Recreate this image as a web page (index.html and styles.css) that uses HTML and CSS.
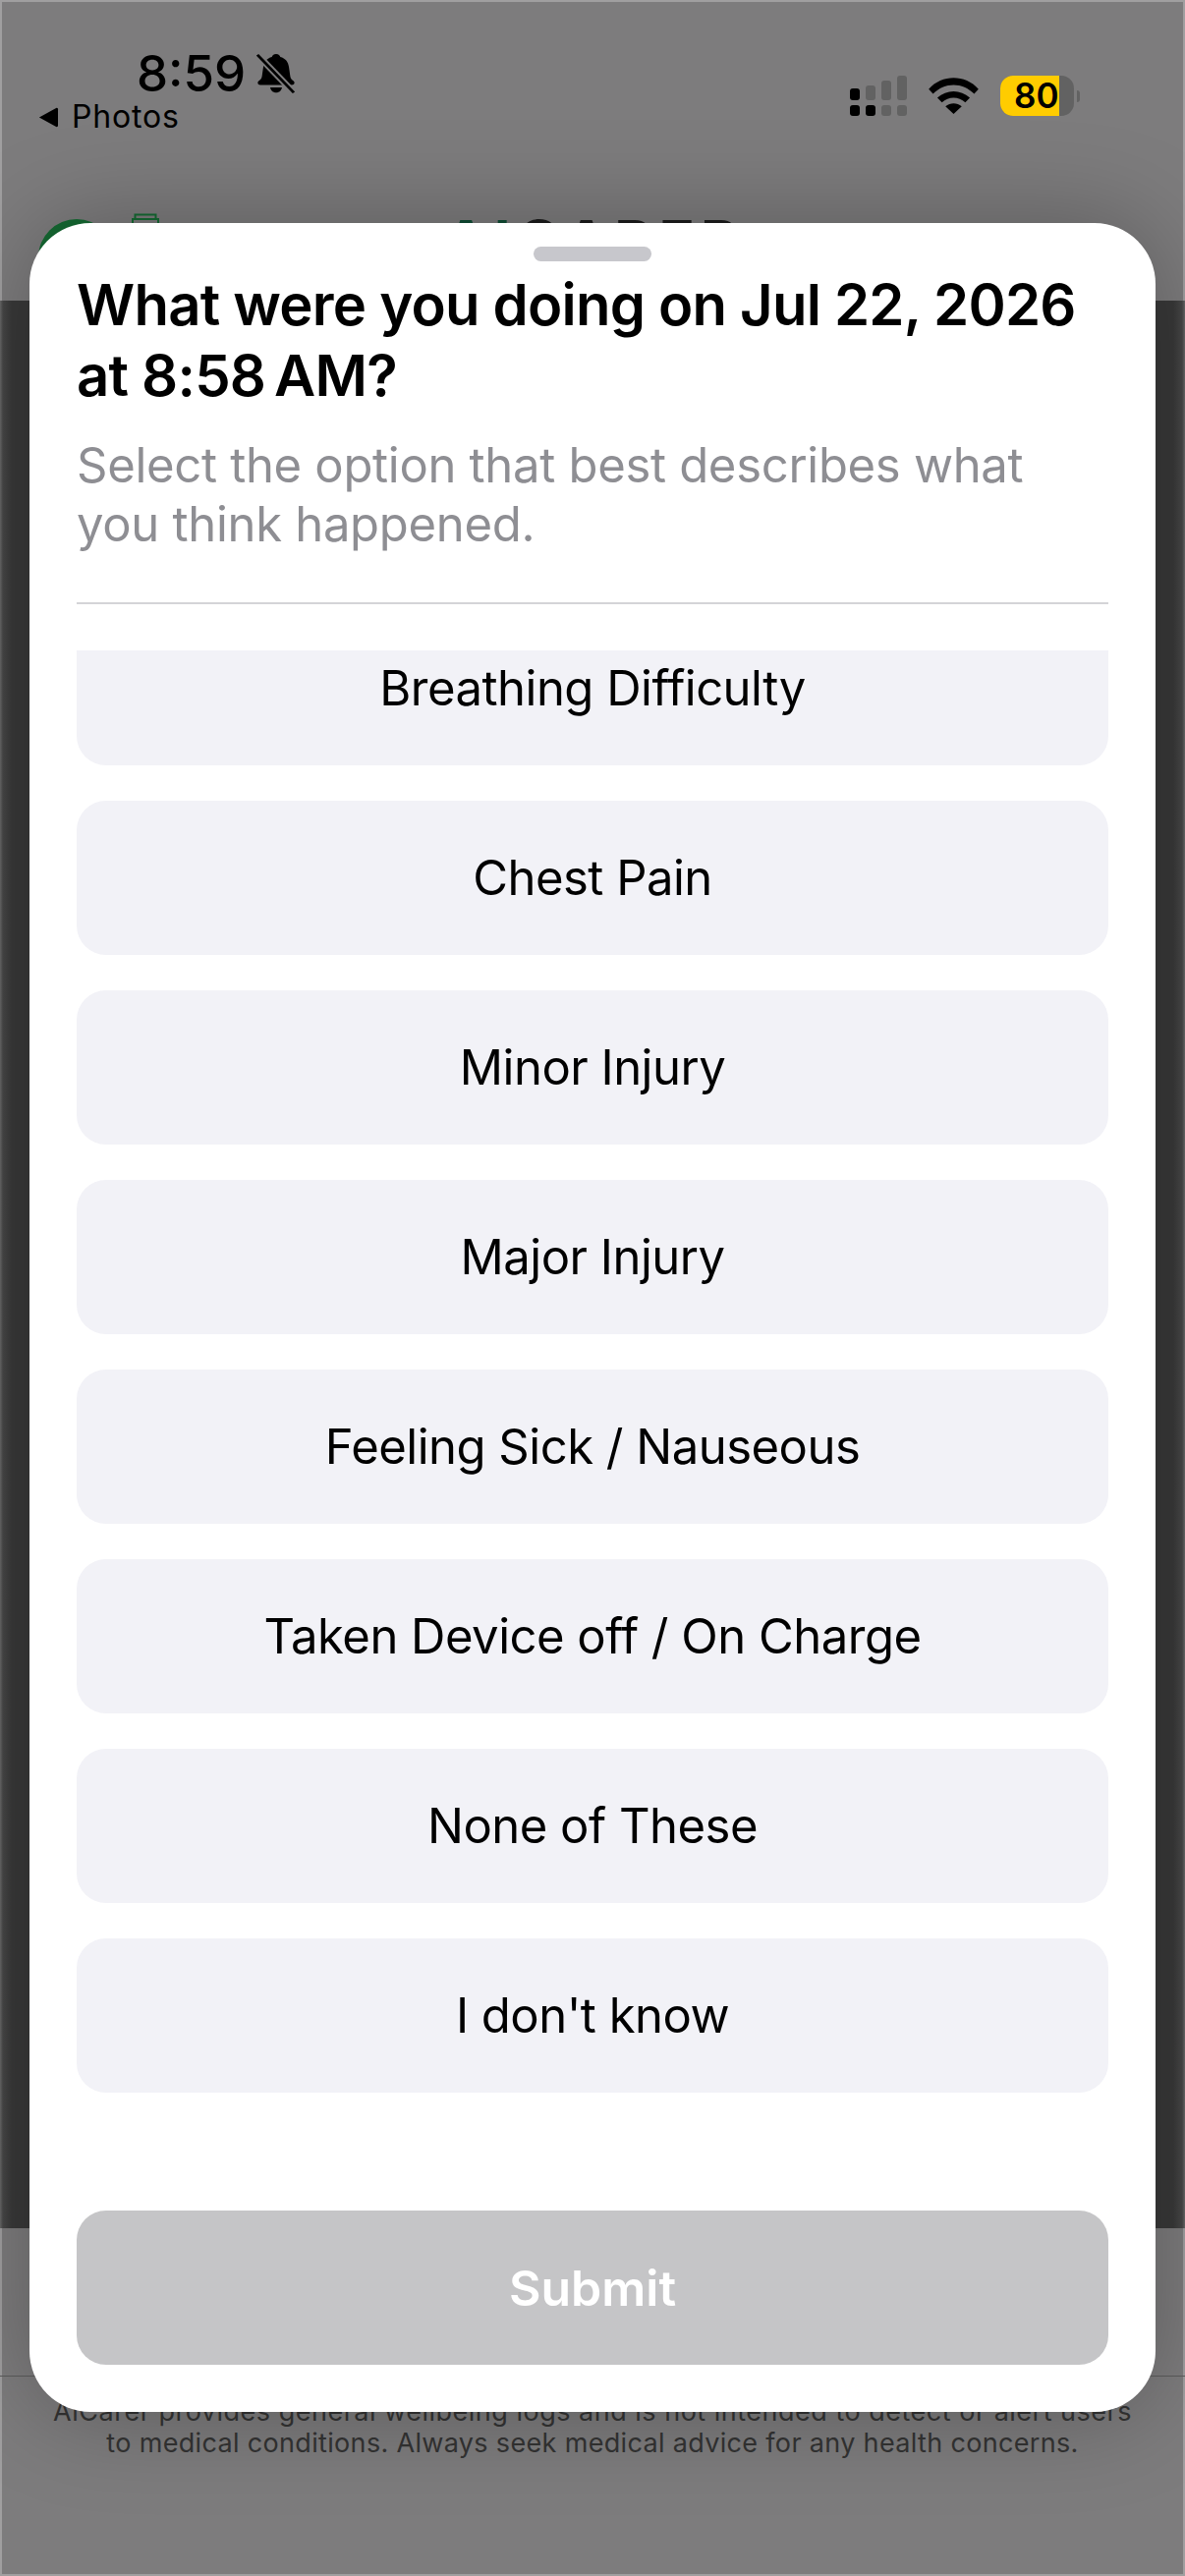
FILE: index.html
```html
<!DOCTYPE html>
<html lang="en">
<head>
<meta charset="utf-8">
<title>AiCarer</title>
<link rel="stylesheet" href="styles.css">
</head>
<body>
<div class="screen">
  <header class="statusbar">
    <div class="status-left">
      <div class="clock-row">
        <span class="clock">8:59</span>
        <svg class="bell" viewBox="0 0 40 48" width="40" height="42" preserveAspectRatio="none"><path d="M20 1c2.600 0 4 1.700 4.300 3.600 5.200 1.500 8 5.700 8.700 11.400l1.400 11c.3 2.300 1.600 4 3.400 5.600 1.400 1.300 1.200 4.400-1.800 4.400H4c-3 0-3.200-3.100-1.800-4.400 1.800-1.600 3.100-3.300 3.400-5.600l1.400-11c.7-5.700 3.500-9.900 8.700-11.400C16 2.700 17.400 1 20 1z"/><path d="M14 40h12c-.4 3.500-2.800 6-6 6s-5.600-2.500-6-6z"/><path d="M1 2l37 44" stroke="#7d7c7d" stroke-width="7"/><path d="M1 2l37 44" stroke="#000" stroke-width="3"/></svg>
      </div>
      <div class="back-row">
        <svg class="back-arrow" viewBox="0 0 22 22" width="22" height="21"><path d="M1.500 11L20 .8q1.500 0 1.500 1.500v17.400q0 1.500-1.500 1.500z"/></svg>
        <span class="back-label">Photos</span>
      </div>
    </div>
    <div class="status-right">
      <svg class="signal" viewBox="0 0 58 41" width="58" height="41">
        <rect x="0" y="13" width="10" height="12" rx="3"/>
        <rect x="0" y="30" width="10" height="11" rx="3"/>
        <rect x="16" y="30" width="10" height="11" rx="3"/>
        <g fill="#626262">
          <rect x="16" y="10" width="10" height="15" rx="3"/>
          <rect x="32" y="5" width="10" height="20" rx="3"/>
          <rect x="32" y="30" width="10" height="11" rx="3"/>
          <rect x="48" y="0" width="10" height="25" rx="3"/>
          <rect x="48" y="30" width="10" height="11" rx="3"/>
        </g>
      </svg>
      <svg class="wifi" viewBox="0 0 52 38" width="51" height="37">
        <path d="M0 12C14-3.500 38-3.500 52 12l-4.500 5C35.500 4.500 16.500 4.500 4.500 17z"/>
        <path d="M9 21c9.500-9 24.500-9 34 0l-4.800 5c-6.800-6.500-17.600-6.500-24.400 0z"/>
        <path d="M17.500 30c5-4 12-4 17 0L26 38z"/>
      </svg>
      <div class="battery">
        <div class="battery-body">
          <div class="battery-fill"></div>
          <span class="battery-text">80</span>
        </div>
        <span class="battery-cap"></span>
      </div>
    </div>
  </header>

  <div class="backdrop-brand">
    <span class="brand-circle"></span>
    <svg class="brand-icon" viewBox="0 0 28 14" width="28" height="14"><path d="M3.500 5V1.500h21V5M1 11V6h26v5" fill="none" stroke="#156a33" stroke-width="2"/></svg>
    <span class="brand-name"><span class="brand-accent">AI</span>CARER</span>
  </div>
  <div class="backdrop-band"></div>
  <div class="backdrop-footer">
    <p class="footer-note">AiCarer provides general wellbeing logs and is not intended to detect or alert users<br><span class="footer-tight">to medical conditions. Always seek medical advice for any health concerns.</span></p>
  </div>

  <section class="sheet">
    <div class="handle"></div>
    <h1 class="title">What were you doing on Jul 22, 2026<br>at 8:58&#8239;AM?</h1>
    <p class="subtitle">Select the option that best describes what<br>you think happened.</p>
    <div class="divider"></div>
    <div class="list-clip">
      <ul class="options">
        <li class="option">Breathing Difficulty</li>
        <li class="option">Chest Pain</li>
        <li class="option">Minor Injury</li>
        <li class="option">Major Injury</li>
        <li class="option">Feeling Sick / Nauseous</li>
        <li class="option">Taken Device off / On Charge</li>
        <li class="option">None of These</li>
        <li class="option">I don't know</li>
      </ul>
    </div>
    <button class="submit" type="button">Submit</button>
  </section>
</div>
</body>
</html>
```

FILE: styles.css
```css
* { box-sizing: border-box; }
html, body { margin: 0; padding: 0; }
body { width: 1206px; height: 2622px; overflow: hidden; font-family: Inter, "Liberation Sans", sans-serif; }

.screen {
  position: relative;
  width: 1206px;
  height: 2622px;
  overflow: hidden;
  background: #7d7c7d;
  box-shadow: inset 0 0 0 2px #a09fa0;
}

.statusbar {
  position: relative;
  display: flex;
  justify-content: space-between;
  padding: 50px 0 0 38px;
}
.status-left { display: flex; flex-direction: column; }
.clock-row { display: flex; align-items: center; gap: 11px; padding-left: 101px; height: 50px; }
.clock { font-size: 51px; font-weight: 500; line-height: 50px; color: #000; }
.bell { display: block; }
.back-row { display: flex; align-items: center; gap: 13px; margin-top: -1px; }
.back-arrow { display: block; }
.back-label { font-size: 32px; line-height: 40px; letter-spacing: .8px; color: #000; }

.status-right { display: flex; align-items: flex-start; padding: 27px 107px 0 0; }
.signal { display: block; margin-right: 22px; }
.wifi { display: block; margin: 2px 22px 0 0; }
.battery { display: flex; align-items: center; gap: 3px; }
.battery-body {
  position: relative;
  width: 75px;
  height: 41px;
  border-radius: 13px;
  background: #626262;
  overflow: hidden;
}
.battery-fill { width: 60px; height: 41px; background: #ffcc00; }
.battery-text {
  position: absolute;
  left: 14px;
  top: 0;
  font-size: 35px;
  line-height: 41px;
  font-weight: 600;
  color: #000;
}
.battery-cap { width: 3px; height: 12px; background: #626262; border-radius: 0 6px 6px 0; }

.backdrop-brand { position: absolute; left: 0; top: 216px; width: 1206px; height: 40px; }
.brand-circle { position: absolute; left: 39px; top: 7px; width: 78px; height: 78px; border-radius: 50%; background: #156a33; }
.brand-icon { position: absolute; left: 134px; top: 1px; }
.brand-name { position: absolute; left: 452px; top: -2px; font-size: 60px; font-weight: 700; line-height: 64px; letter-spacing: 6px; color: #1c1c1c; }
.brand-accent { color: #0f4d35; }

.backdrop-band {
  position: absolute;
  left: 0; right: 0; top: 306px; height: 1962px;
  background: linear-gradient(90deg, #6a6a6a 0, #474747 3px, #393939 12px, #393939 1194px, #474747 1203px, #6a6a6a 1206px);
}
.backdrop-footer {
  position: absolute;
  left: 0; right: 0; top: 2418px;
  border-top: 1px solid #5c5c5c;
  padding-top: 20px;
}
.footer-note {
  margin: 0;
  text-align: center;
  font-size: 27px;
  line-height: 32px;
  letter-spacing: .5px;
  color: #333;
}
.footer-tight { letter-spacing: .33px; }

.sheet {
  position: absolute;
  left: 30px;
  top: 227px;
  width: 1146px;
  height: 2228px;
  background: #fff;
  border-radius: 62px;
  box-shadow: 0 0 100px rgba(0, 0, 0, .28);
  padding: 24px 48px 0;
  display: flex;
  flex-direction: column;
}
.handle { align-self: center; width: 120px; height: 15px; border-radius: 8px; background: #c7c7cc; flex: none; }
.title { margin: 8px 0 0; font-size: 58px; line-height: 72px; font-weight: 600; letter-spacing: -.77px; color: #000; }
.subtitle { margin: 26px 0 0; font-size: 49px; line-height: 60px; font-weight: 400; letter-spacing: -.3px; color: #8e8e93; }
.divider { height: 2px; background: #d4d4d7; margin-top: 49px; flex: none; }
.list-clip { height: 1512px; margin-top: 47px; overflow: hidden; flex: none; }
.options { list-style: none; margin: -40px 0 0; padding: 0; display: flex; flex-direction: column; gap: 36px; }
.option {
  height: 157px;
  border-radius: 30px;
  background: #f2f2f7;
  display: flex;
  align-items: center;
  justify-content: center;
  font-size: 49px;
  letter-spacing: -.5px;
  color: #000;
}
.submit {
  display: block;
  width: 100%;
  height: 157px;
  margin-top: 76px;
  border: 0;
  border-radius: 30px;
  background: #c5c5c7;
  color: #fff;
  font-family: inherit;
  font-size: 50px;
  font-weight: 600;
}
```
